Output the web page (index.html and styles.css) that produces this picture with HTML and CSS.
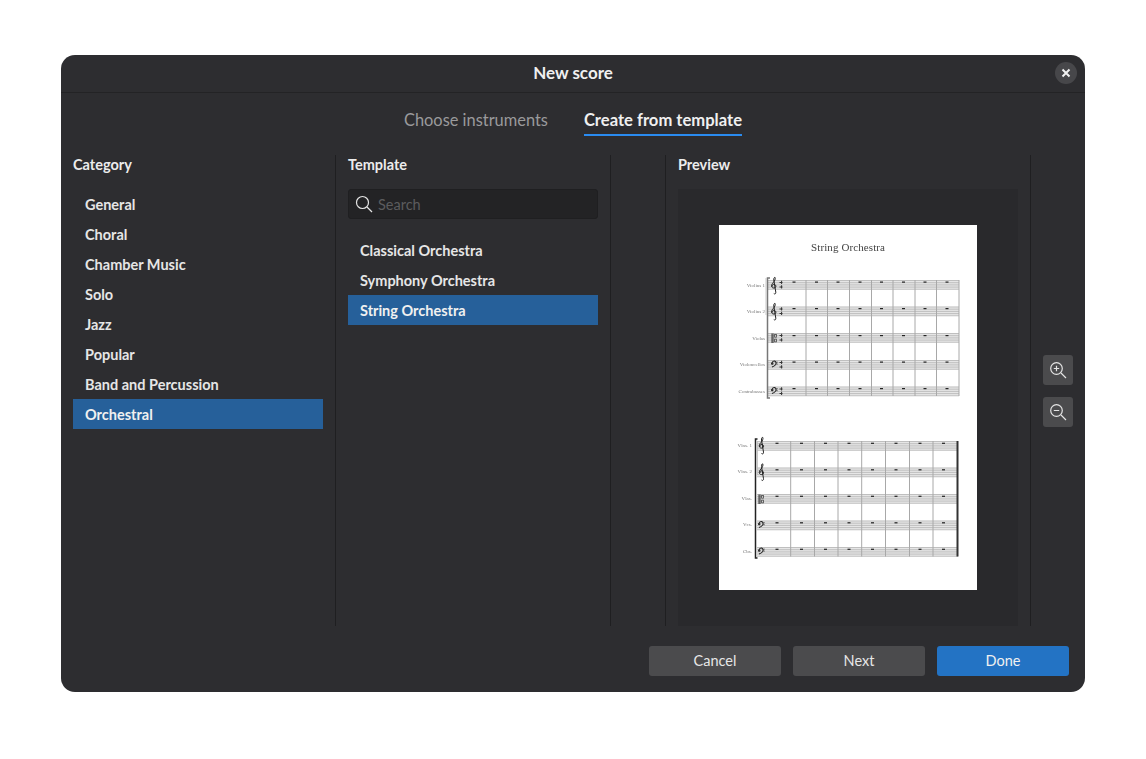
FILE: index.html
```html
<!DOCTYPE html>
<html>
<head>
<meta name="viewport" content="width=device-width, initial-scale=1">
<link rel="stylesheet" href="styles.css">
</head>
<body>

<div class="dialog">
  <div class="titlebar">
    <span class="title">New score</span>
    <button class="closebtn">
      <svg width="10" height="10" viewBox="0 0 10 10"><path d="M1.500 1.500l7 7M8.500 1.500l-7 7" stroke="#f2f2f2" stroke-width="2"/></svg>
    </button>
  </div>

  <div class="tabs">
    <span class="tab">Choose instruments</span>
    <span class="tab active">Create from template</span>
  </div>

  <div class="columns">
    <div class="col col-list">
      <div class="heading">Category</div>
      <div class="row">General</div>
      <div class="row">Choral</div>
      <div class="row">Chamber Music</div>
      <div class="row">Solo</div>
      <div class="row">Jazz</div>
      <div class="row">Popular</div>
      <div class="row">Band and Percussion</div>
      <div class="row selected">Orchestral</div>
    </div>

    <div class="col col-list">
      <div class="heading">Template</div>
      <div class="search">
        <svg width="18" height="18" viewBox="0 0 18 18"><circle cx="7.500" cy="7.500" r="6" fill="none" stroke="#e4e4e4" stroke-width="1.200"/><path d="M12 12l5 5" stroke="#e4e4e4" stroke-width="1.200"/></svg>
        <span>Search</span>
      </div>
      <div class="templates">
        <div class="row">Classical Orchestra</div>
        <div class="row">Symphony Orchestra</div>
        <div class="row selected">String Orchestra</div>
      </div>
    </div>

    <div class="col col-spacer"></div>

    <div class="col col-preview">
      <div class="heading">Preview</div>
      <div class="preview">
        <svg class="page" width="258" height="365" viewBox="719 225 258 365">
          <defs>
            <g id="staff">
              <rect x="0" y="0" width="1" height="9.500" class="band"/>
              <path class="lines" d="M0 .5H1M0 2.700H1M0 4.900H1M0 7.100H1M0 9.300H1" vector-effect="non-scaling-stroke"/>
            </g>
            <path id="treble" d="M2.800 12c.9 1 2.300.2 2-1.300L2.800 -1.500c-.3-1.800.8-2.900 1.200-2.700.7 1.300-.1 3.500-1.800 5.300C.9 2.400.2 4 .8 5.500c.8 1.500 3.500 1.500 4-.2.4-1.600-1-2.800-2.500-2.400-1 .3-1.200 1.400-.6 2.100" fill="none" stroke="#222" stroke-width="1"/>
            <path id="bass" d="M.6 2.600c.2-1.500 1.500-2.300 2.600-2 1.500.4 1.700 2.300.8 3.600C3.200 5.300 1.900 6 .5 6.600M1.300 2.600a.7.700 0 1 1-.1-.1M5.200 1.600h.7M5.200 3.600h.7" fill="none" stroke="#222" stroke-width="1.100"/>
            <path id="alto" d="M0 0h1.200v9.400H0zM1.800 0h.5v9.400h-.5zM2.800 .5h2.400v3.600H2.800zM3.500 1.300v2h1v-2zM2.800 5.200h2.400v3.600H2.800zM3.500 6v2h1v-2z" fill="#333" fill-rule="evenodd"/>
            <path id="time" d="M0 1.500h3v.9H0zM1.600 .2h1v3.300h-1zM0 6h3v.9H0zM1.600 4.800h1v3.300h-1z" fill="#333"/>
            <rect id="rest" width="3" height="1.200" fill="#222"/>
          </defs>

          <g class="score">
            <text class="score-title" x="848" y="251" text-anchor="middle" textLength="74">String Orchestra</text>

            <text class="part" x="765" y="287">Violins 1</text>
            <text class="part" x="765" y="313">Violins 2</text>
            <text class="part" x="765" y="340">Violas</text>
            <text class="part" x="765" y="366">Violoncellos</text>
            <text class="part" x="765" y="393">Contrabasses</text>

            <g transform="translate(768 280) scale(191 1)"><use href="#staff"/></g>
            <g transform="translate(768 306.500) scale(191 1)"><use href="#staff"/></g>
            <g transform="translate(768 333) scale(191 1)"><use href="#staff"/></g>
            <g transform="translate(768 360) scale(191 1)"><use href="#staff"/></g>
            <g transform="translate(768 386.500) scale(191 1)"><use href="#staff"/></g>

            <path class="bar-soft" d="M806 280V396M827.500 280V396M849.500 280V396M871.500 280V396M893 280V396M915 280V396M936.500 280V396M959 280V396"/>
            <path class="bracket" d="M770 278H767.500V398H770"/>
            <path class="group" d="M766 278V315"/>

            <use href="#treble" x="771" y="281.500"/>
            <use href="#treble" x="771" y="307.500"/>
            <use href="#alto" x="771.500" y="333.500"/>
            <use href="#bass" x="771.500" y="360.500"/>
            <use href="#bass" x="771.500" y="387"/>
            <use href="#time" x="779.500" y="280.500"/>
            <use href="#time" x="779.500" y="307"/>
            <use href="#time" x="779.500" y="333.500"/>
            <use href="#time" x="779.500" y="360.500"/>
            <use href="#time" x="779.500" y="387"/>

            <g id="rests1">
              <use href="#rest" x="792.500" y="281.500"/><use href="#rest" x="815" y="281.500"/><use href="#rest" x="836.500" y="281.500"/><use href="#rest" x="858.500" y="281.500"/><use href="#rest" x="880" y="281.500"/><use href="#rest" x="902" y="281.500"/><use href="#rest" x="923.500" y="281.500"/><use href="#rest" x="945.500" y="281.500"/>
            </g>
            <use href="#rests1" y="26.500"/>
            <use href="#rests1" y="53.500"/>
            <use href="#rests1" y="80"/>
            <use href="#rests1" y="106.500"/>

            <text class="part" x="752" y="447">Vlns. 1</text>
            <text class="part" x="752" y="473">Vlns. 2</text>
            <text class="part" x="752" y="500">Vlas.</text>
            <text class="part" x="752" y="526">Vcs.</text>
            <text class="part" x="752" y="553">Cbs.</text>

            <g transform="translate(757 441) scale(201 1)"><use href="#staff"/></g>
            <g transform="translate(757 467.500) scale(201 1)"><use href="#staff"/></g>
            <g transform="translate(757 494) scale(201 1)"><use href="#staff"/></g>
            <g transform="translate(757 520.500) scale(201 1)"><use href="#staff"/></g>
            <g transform="translate(757 547) scale(201 1)"><use href="#staff"/></g>

            <path class="bar-soft" d="M790.700 441V556.500M814.500 441V556.500M838 441V556.500M861.700 441V556.500M885.500 441V556.500M909.500 441V556.500M933 441V556.500"/>
            <path class="endbar" d="M957.500 441V556.500"/>
            <path class="bracket dark" d="M757.500 439H755.500V558H757.500"/>
            <path class="group" d="M757.500 441V475"/>

            <use href="#treble" x="758.700" y="441.500"/>
            <use href="#treble" x="758.700" y="468"/>
            <use href="#alto" x="758.500" y="494.500"/>
            <use href="#bass" x="758.500" y="521"/>
            <use href="#bass" x="758.500" y="547.500"/>

            <g id="rests2">
              <use href="#rest" x="775.500" y="442.700"/><use href="#rest" x="800" y="442.700"/><use href="#rest" x="824" y="442.700"/><use href="#rest" x="847.500" y="442.700"/><use href="#rest" x="871" y="442.700"/><use href="#rest" x="894.500" y="442.700"/><use href="#rest" x="918.500" y="442.700"/><use href="#rest" x="942" y="442.700"/>
            </g>
            <use href="#rests2" y="26.500"/>
            <use href="#rests2" y="53"/>
            <use href="#rests2" y="79.500"/>
            <use href="#rests2" y="106"/>
          </g>
        </svg>
      </div>
    </div>

    <div class="col col-zoom">
      <button class="zoombtn">
        <svg width="18" height="18" viewBox="0 0 18 18"><circle cx="7.500" cy="7.500" r="5.800" fill="none" stroke="#e4e4e4" stroke-width="1.200"/><path d="M12 12l5 5M7.500 4.800v5.400M4.800 7.500h5.400" stroke="#e4e4e4" stroke-width="1.200"/></svg>
      </button>
      <button class="zoombtn">
        <svg width="18" height="18" viewBox="0 0 18 18"><circle cx="7.500" cy="7.500" r="5.800" fill="none" stroke="#e4e4e4" stroke-width="1.200"/><path d="M12 12l5 5M4.800 7.500h5.400" stroke="#e4e4e4" stroke-width="1.200"/></svg>
      </button>
    </div>
  </div>

  <div class="footer">
    <button class="btn">Cancel</button>
    <button class="btn">Next</button>
    <button class="btn primary">Done</button>
  </div>
</div>

</body>
</html>
```

FILE: styles.css
```css
* {
  box-sizing: border-box;
}

body {
  margin: 0;
  padding: 55px 61px;
  background: #ffffff;
  font-family: Lato, "Open Sans", sans-serif;
  color: #ececec;
}

button {
  border: none;
  font-family: inherit;
}

.dialog {
  width: 1024px;
  height: 637px;
  background: #2d2d30;
  border-radius: 14px;
  display: flex;
  flex-direction: column;
  overflow: hidden;
}

/* Title bar */
.titlebar {
  height: 38px;
  flex: none;
  display: flex;
  align-items: center;
  justify-content: center;
  position: relative;
  border-bottom: 1px solid #232325;
  padding-bottom: 3px;
}

.title {
  font-size: 17px;
  font-weight: 700;
  color: #f0f0f0;
}

.closebtn {
  position: absolute;
  right: 8px;
  top: 7px;
  width: 22px;
  height: 22px;
  padding: 0;
  border-radius: 50%;
  background: #47474a;
  display: flex;
  align-items: center;
  justify-content: center;
}

/* Tabs */
.tabs {
  height: 43px;
  flex: none;
  display: flex;
  justify-content: center;
  gap: 36px;
}

.tab {
  font-size: 16.400px;
  line-height: 24px;
  margin-top: 15px;
  height: 28px;
  color: #9a9a9c;
}

.tab.active {
  font-size: 16.600px;
  color: #f0f0f0;
  font-weight: 700;
  border-bottom: 2px solid #2a8bf0;
}

/* Columns */
.columns {
  margin-top: 19px;
  height: 471px;
  flex: none;
  display: flex;
}

.col {
  flex: none;
  border-right: 1px solid #1f1f21;
}

.col-list {
  width: 275px;
  padding: 0 12px;
}

.col-spacer {
  width: 55px;
}

.col-preview {
  width: 365px;
  padding: 0 12px;
  display: flex;
  flex-direction: column;
}

.col-zoom {
  flex: 1;
  border-right: none;
  padding-left: 12px;
  display: flex;
  flex-direction: column;
  justify-content: center;
  gap: 12px;
}

.heading {
  height: 20px;
  line-height: 20px;
  margin-bottom: 14px;
  font-size: 14.500px;
  font-weight: 700;
  color: #ececec;
}

.row {
  height: 30px;
  line-height: 31px;
  padding-left: 12px;
  font-size: 14.500px;
  font-weight: 700;
  color: #e6e6e6;
}

.row.selected {
  background: #26609a;
  color: #f0f0f0;
}

.search {
  height: 30px;
  background: #232325;
  border: 1px solid #1f1f21;
  border-radius: 3px;
  display: flex;
  align-items: center;
  gap: 5px;
  padding-left: 6px;
  font-size: 14.500px;
  line-height: 19px;
  color: #5c5c5e;
}

.search span {
  padding-top: 1px;
}

.templates {
  margin-top: 16px;
}

.preview {
  flex: 1;
  background: #29292c;
  display: flex;
  align-items: center;
  justify-content: center;
}

.zoombtn {
  width: 30px;
  height: 30px;
  padding: 0;
  border-radius: 3px;
  background: #4b4b4d;
  display: flex;
  align-items: center;
  justify-content: center;
}

/* Footer */
.footer {
  flex: 1;
  display: flex;
  justify-content: flex-end;
  gap: 12px;
  padding: 20px 16px 0 0;
}

.btn {
  width: 132px;
  height: 30px;
  padding: 0 0 2px;
  border-radius: 3px;
  background: #4b4b4d;
  color: #e6e6e6;
  font-size: 14.500px;
}

.btn.primary {
  background: #2373c4;
  color: #f0f0f0;
}

/* Score page */
.page {
  background: #ffffff;
  display: block;
}

.score {
  filter: blur(0.35px);
}

.score-title {
  font-family: "Liberation Serif", serif;
  font-size: 11px;
  fill: #444;
}

.part {
  font-family: "Liberation Serif", serif;
  font-size: 5px;
  fill: #777;
  text-anchor: end;
}

.band {
  fill: #e6e6e6;
}

.lines {
  stroke: #999;
  stroke-width: 0.5px;
  fill: none;
}

.bar-soft {
  stroke: #a8a8a8;
  stroke-width: 1px;
  fill: none;
}

.endbar {
  stroke: #333;
  stroke-width: 2px;
  fill: none;
}

.bracket {
  stroke: #777;
  stroke-width: 1.500px;
  fill: none;
}

.bracket.dark {
  stroke: #222;
}

.group {
  stroke: #bbb;
  stroke-width: 0.800px;
  fill: none;
}
```
